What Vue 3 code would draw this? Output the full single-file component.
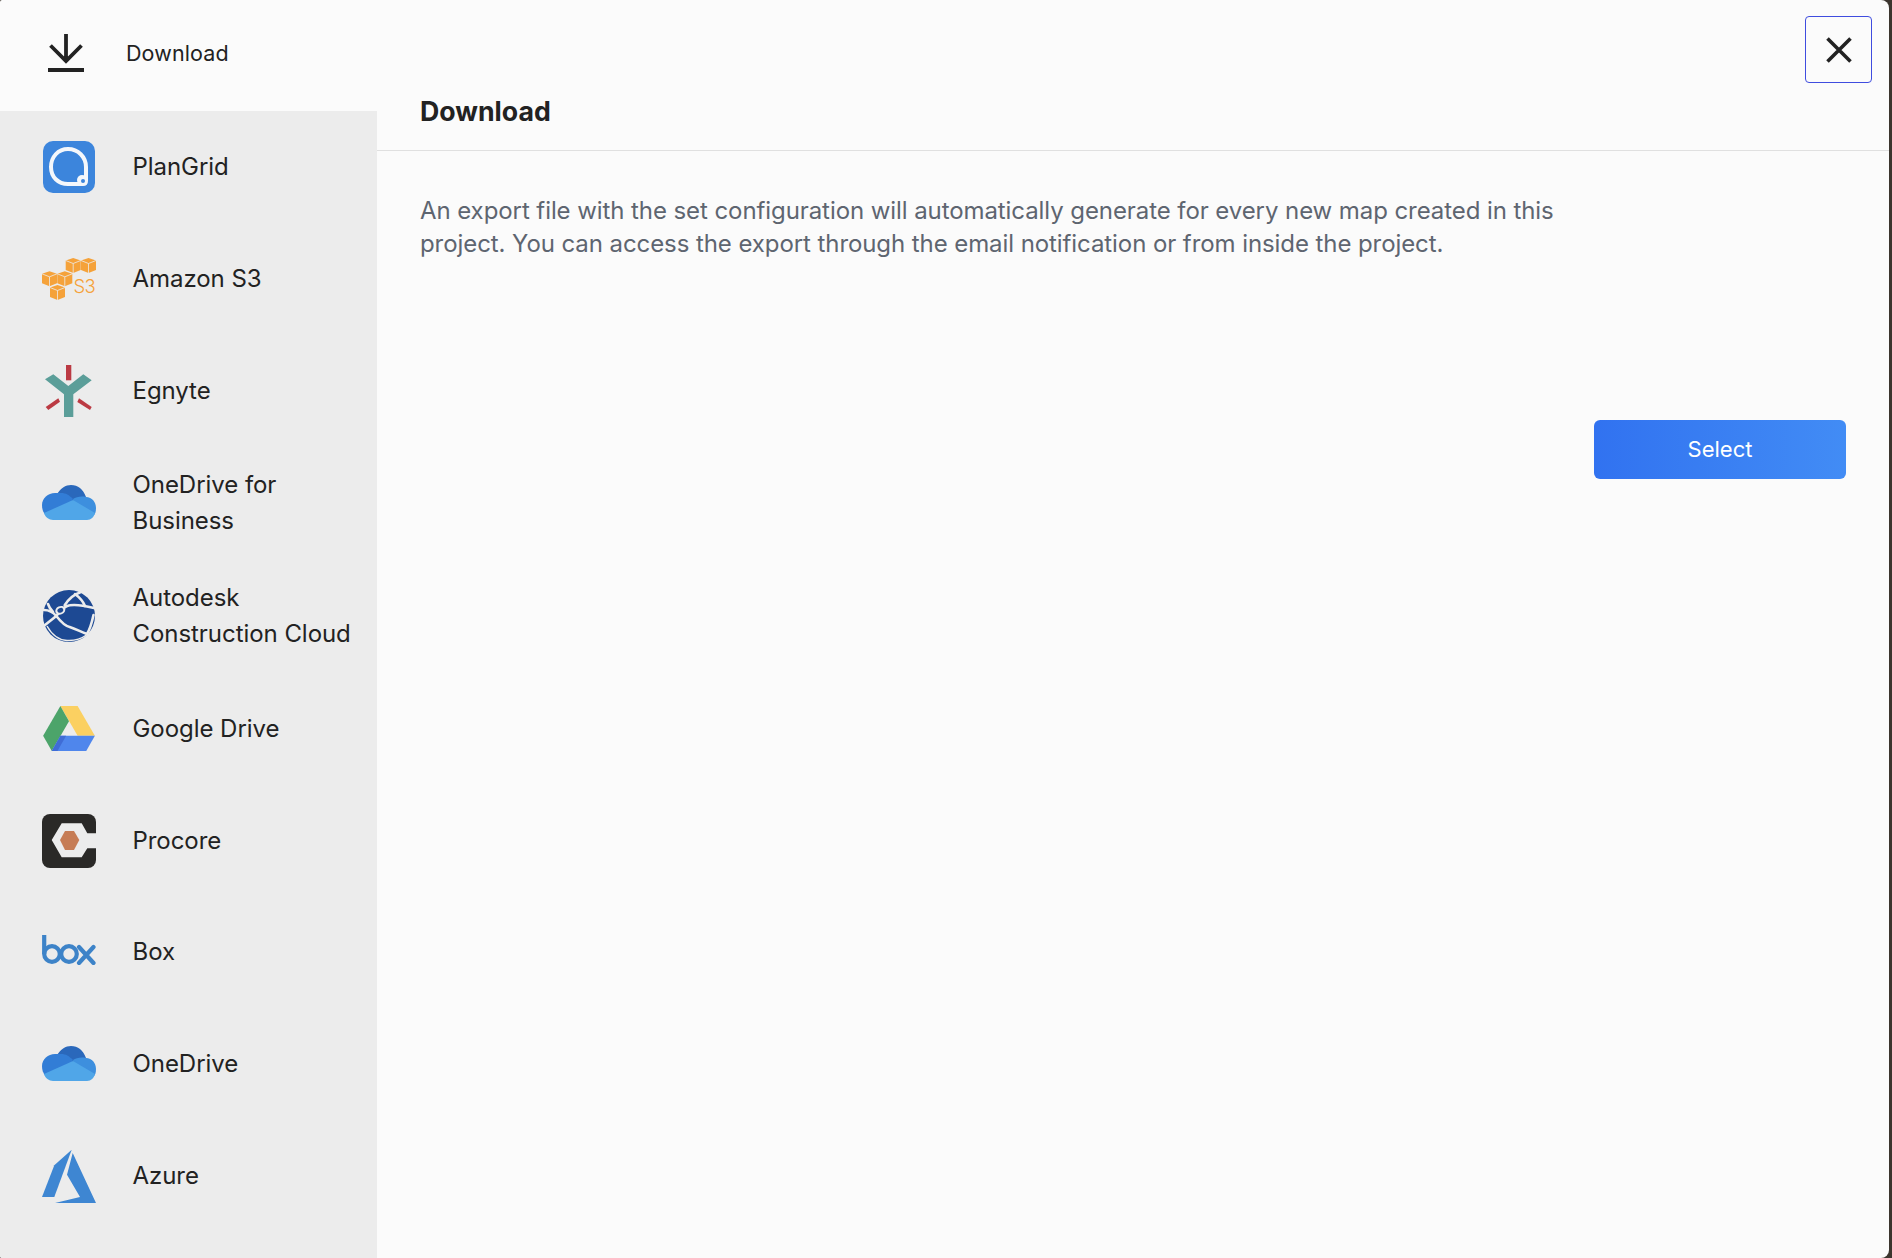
<script setup>
const rows = [
  { id: 'plangrid', label: 'PlanGrid' },
  { id: 's3', label: 'Amazon S3' },
  { id: 'egnyte', label: 'Egnyte' },
  { id: 'onedrive', label: 'OneDrive for Business', two: true },
  { id: 'autodesk', label: 'Autodesk Construction Cloud', two: true },
  { id: 'gdrive', label: 'Google Drive' },
  { id: 'procore', label: 'Procore' },
  { id: 'box', label: 'Box' },
  { id: 'onedrive', label: 'OneDrive' },
  { id: 'azure', label: 'Azure' }
]
const cubes = [
  [23.7, 0], [39, 0], [0, 13.3], [15.3, 13.3], [8, 27]
]
</script>

<template>
  <div class="modal">
    <aside class="side">
      <div class="side-head">
        <svg class="dl" viewBox="0 0 36 38" width="36" height="38">
          <path d="M18 0V27M2.500 11.500L18 27L33.500 11.500" fill="none" stroke="#222" stroke-width="3.800" />
          <rect x="0" y="34" width="36" height="4" fill="#222" />
        </svg>
        <span class="dl-label">Download</span>
      </div>
      <ul class="list">
        <li v-for="r in rows" :key="r.label" class="row" :class="{ two: r.two }">
          <span class="ico" :class="`ico-${r.id}`">
            <svg v-if="r.id === 'plangrid'" viewBox="0 0 54 54" width="54" height="54">
              <rect x="1" y="1" width="52" height="52" rx="10" fill="#3c85dc" />
              <path d="M26 9C36 9 44 17 44 27V41C44 43 43 44 41 44H26C16 44 9 37 9 27C9 17 16 9 26 9Z" fill="none" stroke="#f4f7fb" stroke-width="4" stroke-linejoin="round" />
              <circle cx="40" cy="40" r="5" fill="#f4f7fb" />
              <circle cx="41" cy="41" r="2" fill="#3c85dc" />
            </svg>
            <svg v-else-if="r.id === 's3'" viewBox="0 0 54 42" width="54" height="42">
              <g v-for="(c, i) in cubes" :key="i" :transform="`translate(${c[0]} ${c[1]})`">
                <path d="M7.500 0L15 2.500V12L7.500 15L0 12V2.500Z" fill="#f5a23a" />
                <path d="M0 2.500L7.500 5.500L15 2.500M7.500 5.500V15" fill="none" stroke="#ececec" stroke-width="0.800" />
              </g>
              <text x="31.500" y="35" class="s3t">S3</text>
            </svg>
            <svg v-else-if="r.id === 'egnyte'" viewBox="0 0 54 54" width="54" height="54">
              <path d="M24 1H29.300V16.300H24Z" fill="#bb3a43" />
              <path d="M3.700 43L16.300 34.300L18 37.700L6.300 46Z" fill="#bb3a43" />
              <path d="M35.300 38L37 34.300L49.700 43L48 46Z" fill="#bb3a43" />
              <path d="M3 15.300L11.300 10.300L26.300 22L41.300 10.300L49.700 16.300L31.300 30.300V53H22V30.300Z" fill="#5b9e99" />
            </svg>
            <svg v-else-if="r.id === 'onedrive'" viewBox="0 0 54 36" width="54" height="36">
              <path d="M14 11C18 3 24 0 29 0C36 0 41 4 44 12L30 26L10 14Z" fill="#2a68bb" />
              <path d="M19 8C24 8 27 10 31 14L23 30L3 29C1 27 0 24 0 20C0 13 6 8 13 8C15 8 17 8 19 8Z" fill="#327dd6" />
              <path d="M44 12C50 12 54 17 54 23C54 27 53 29 52 30L34 26L31 14C34 12 39 11 44 12Z" fill="#3d8fde" />
              <path d="M2 28L31 15L53 28C52 32 49 35 45 35H11C7 35 3 32 2 28Z" fill="#50a6e8" />
            </svg>
            <svg v-else-if="r.id === 'autodesk'" viewBox="0 0 54 54" width="54" height="54">
              <circle cx="27" cy="27" r="26" fill="#1d4993" />
              <g fill="none" stroke="#ececec" stroke-width="2.600" stroke-linecap="round">
                <path d="M14.300 27C18 22 22 17 27.700 16.300C35 15 44 17 52 19" />
                <path d="M14.300 27C19 33 23 37 27.700 38C34 40 39 43 45 45" />
                <path d="M2.700 36.300L14.300 27" />
                <path d="M2 21C6 21 11 23 14.300 27" />
                <path d="M6 15C7 18 9 21 11 23" />
                <path d="M22.700 16.300C26 11 30 6 38 3.500" />
                <path d="M33 5C37 8 41 12 43 17" />
                <path d="M51.500 26C50 33 48 40 45 45" />
              </g>
              <path d="M5 37C10 46 17 51 25 51.500C33 52 39 50 44.500 46" fill="none" stroke="#ececec" stroke-width="1.500" />
              <ellipse cx="18.300" cy="21.300" rx="5.200" ry="4.200" transform="rotate(-25 18.300 21.300)" fill="#ececec" />
              <ellipse cx="18.300" cy="21.300" rx="3" ry="2.300" transform="rotate(-25 18.300 21.300)" fill="#1d4993" />
            </svg>
            <svg v-else-if="r.id === 'gdrive'" viewBox="0 0 54 48" width="52" height="46">
              <path d="M18 0H36L54 31H36Z" fill="#fbd061" />
              <path d="M18 0L27 16L9 47L0 31Z" fill="#4ca46a" />
              <path d="M18 31H54L45 47H9Z" fill="#4f86ec" />
              <path d="M18 31H24L15 47H9Z" fill="#3f6cd6" />
            </svg>
            <svg v-else-if="r.id === 'procore'" viewBox="0 0 54 54" width="54" height="54">
              <rect width="54" height="54" rx="8" fill="#2a2927" />
              <path d="M9.700 26L19.700 9.300H39.700L45.300 19.300H54V34.300H45.300L39.700 43.300H19.700Z" fill="#ececec" />
              <path d="M18 26L23 17H32L37.300 26L32 36H23Z" fill="#c67c55" />
            </svg>
            <svg v-else-if="r.id === 'box'" viewBox="0 0 54 30" width="54" height="30">
              <g fill="none" stroke="#3d83c8" stroke-width="4.200">
                <path d="M2.200 0V19" />
                <circle cx="10" cy="19" r="7.800" />
                <circle cx="27" cy="19" r="7.800" />
                <path d="M37 12L51.500 28M51.500 12L37 28" stroke-linecap="round" />
              </g>
            </svg>
            <svg v-else viewBox="0 0 54 54" width="54" height="54">
              <path d="M29.700 0.700L12.300 16.300L0 48H12.300Z" fill="#3e86d2" />
              <path d="M30.700 4L54 54H13L38 48L25 25.700Z" fill="#3e86d2" />
            </svg>
          </span>
          <span class="label">{{ r.label }}</span>
        </li>
      </ul>
    </aside>
    <main class="main">
      <h1 class="title">Download</h1>
      <div class="body">
        <p class="desc">An export file with the set configuration will automatically generate for every new map created in this project. You can access the export through the email notification or from inside the project.</p>
        <div class="actions"><button class="select">Select</button></div>
      </div>
      <button class="close" aria-label="Close">
        <svg viewBox="0 0 26 26" width="26" height="26">
          <path d="M1.500 1.500L24.500 24.500M24.500 1.500L1.500 24.500" stroke="#222" stroke-width="3.600" fill="none" />
        </svg>
      </button>
    </main>
  </div>
</template>

<style>
html, body { margin: 0; height: 100%; background: #3b352e; }
</style>

<style scoped>
.modal {
  width: 1889px;
  height: 1258px;
  display: flex;
  background: #fbfbfb;
  border-radius: 2px 8px 8px 2px;
  overflow: hidden;
  font-family: Inter, "Noto Sans", sans-serif;
  color: #222;
}
.side { width: 377px; flex: none; display: flex; flex-direction: column; }
.side-head { height: 111px; display: flex; align-items: center; padding-left: 48px; box-sizing: border-box; }
.dl { margin-top: -5px; }
.dl-label { margin-left: 42px; margin-top: -5px; font-size: 21.5px; letter-spacing: 0.1px; }
.list { flex: 1; margin: 0; padding: 0; list-style: none; background: #ececec; }
.row { height: 111.9px; box-sizing: border-box; display: flex; align-items: center; padding: 0 12px 0 42px; }
.row.two { height: 113px; }
.ico { width: 54px; flex: none; display: flex; align-items: center; justify-content: center; }
.ico svg { display: block; }
.ico-box svg { margin-top: -4px; }
.label { margin-left: 36.5px; font-size: 24px; line-height: 36px; letter-spacing: -0.05px; }
.s3t { font-family: Inter, sans-serif; font-size: 18.5px; font-weight: 300; letter-spacing: -0.8px; fill: #f5a23a; }
.main { flex: 1; position: relative; }
.title { margin: 0; height: 150px; padding: 0 0 0 43px; border-bottom: 1.5px solid #e0e0e0; font-size: 26.7px; line-height: 222px; font-weight: 700; color: #222; overflow: hidden; }
.body { padding: 43px 43px 0; }
.desc { margin: 0; width: 1150px; font-size: 24px; line-height: 33px; letter-spacing: -0.08px; color: #5e6570; }
.actions { display: flex; justify-content: flex-end; margin-top: 160px; }
.select { width: 252px; height: 59px; padding: 0 0 2px; border: 0; border-radius: 6px; background: linear-gradient(90deg, #3172f0, #428cf5); color: #fff; font: inherit; font-size: 22px; }
.close { position: absolute; right: 17px; top: 16px; width: 67px; height: 67px; border: 1px solid #3f4ddf; border-radius: 4px; background: transparent; display: flex; align-items: center; justify-content: center; padding: 0; }
</style>
